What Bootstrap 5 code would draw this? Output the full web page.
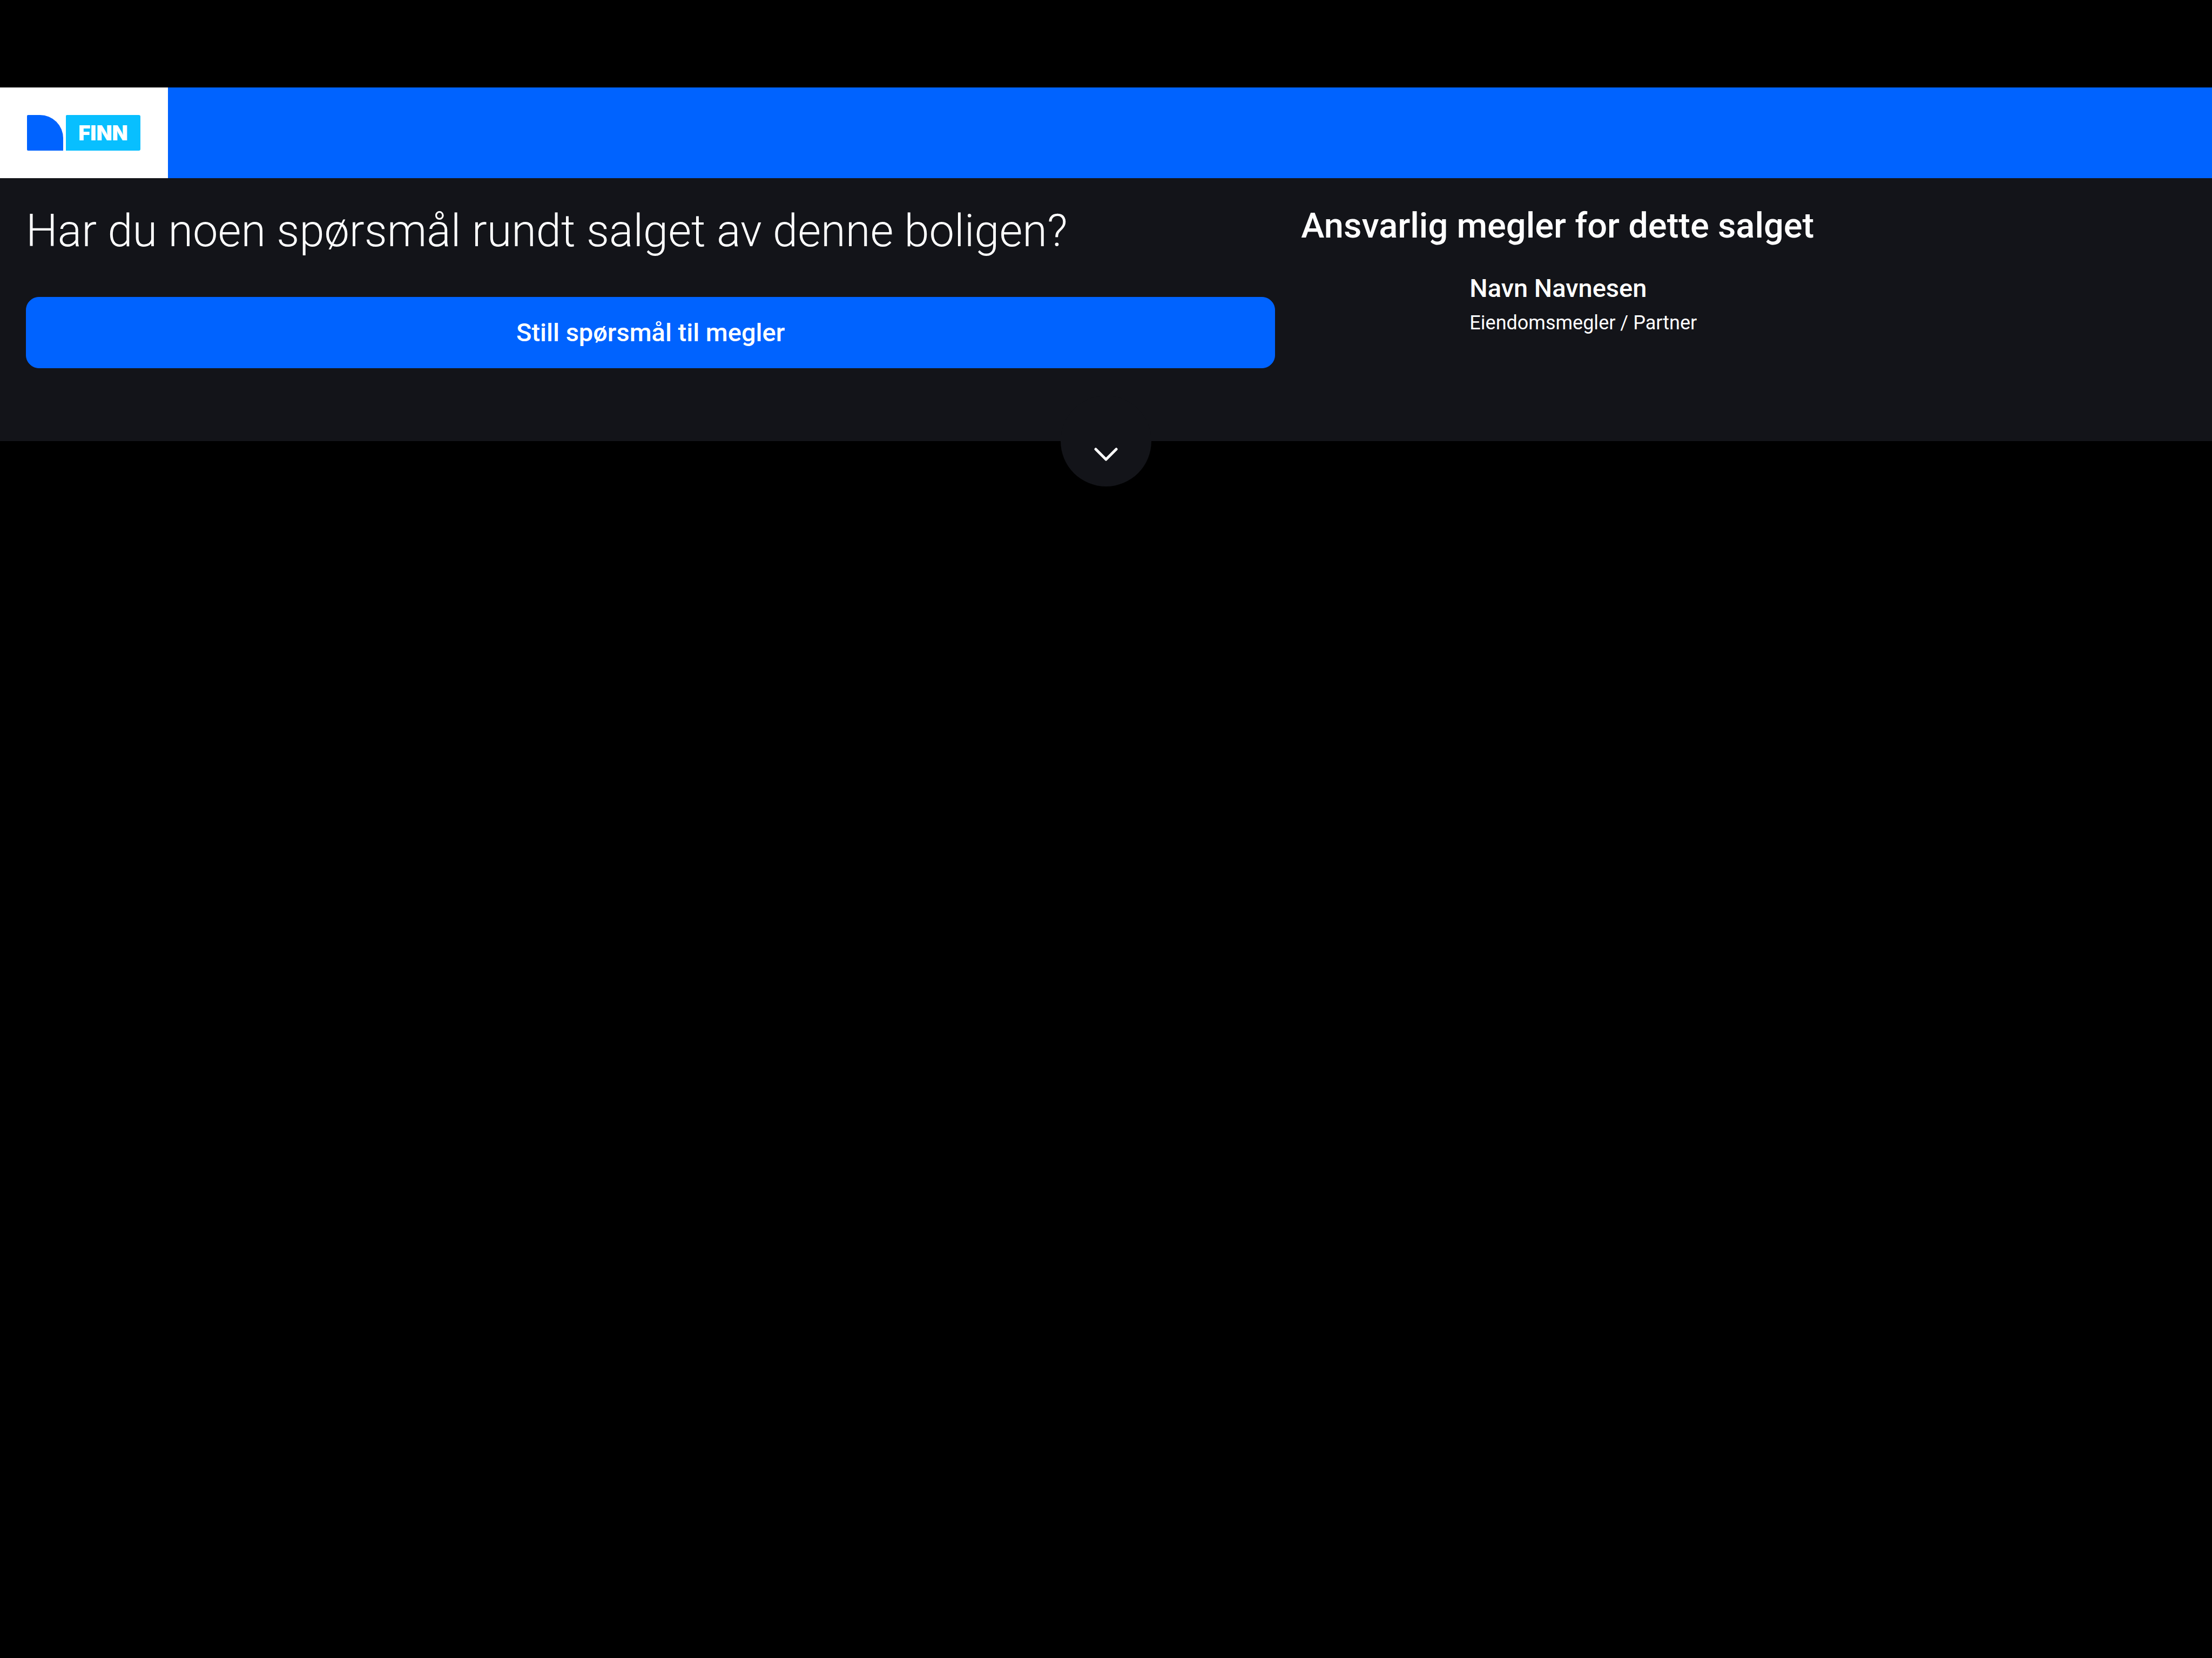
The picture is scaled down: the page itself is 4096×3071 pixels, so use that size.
<!DOCTYPE html>
<html lang="no">
<head>
<meta charset="utf-8">
<meta name="viewport" content="width=device-width, initial-scale=1">
<title>FINN</title>
<link href="https://cdn.jsdelivr.net/npm/bootstrap@5.3.0/dist/css/bootstrap.min.css" rel="stylesheet">
<style>
  body { background: #000; color: #fff; font-family: Roboto, "Liberation Sans", sans-serif; padding-top: 162px; }
  .site-top { background: #0063ff; height: 168px; }
  .brand-box { background: #fff; padding: 0 50px; }
  .brand-box svg { width: 211px; height: 68px; }
  .brand-text { font: 900 38px Inter, "Liberation Sans", sans-serif; fill: #fff; }
  .contact-panel { background: #131419; padding: 48px 48px 135px; }
  .contact-panel .row { --bs-gutter-x: 48px; }
  .question-title { font-size: 83px; line-height: 100px; font-weight: 300; margin-bottom: 72px; }
  .btn-ask {
    --bs-btn-color: #fff; --bs-btn-bg: #0063ff; --bs-btn-border-color: #0063ff;
    --bs-btn-hover-color: #fff; --bs-btn-hover-bg: #0053d6; --bs-btn-hover-border-color: #0053d6;
    --bs-btn-font-size: 47px; --bs-btn-font-weight: 500; --bs-btn-line-height: 56px;
    --bs-btn-padding-y: 37px; --bs-btn-border-radius: 24px;
  }
  .broker-title { font-size: 65px; line-height: 80px; font-weight: 500; margin-bottom: 48px; }
  .broker-photo { width: 264px; }
  .broker { gap: 48px; }
  .broker-name { font-size: 47px; line-height: 56px; font-weight: 500; margin-bottom: 12px; }
  .broker-role { font-size: 36px; line-height: 48px; }
  .btn-expand, .btn-expand:hover { background: #131419; color: #fff; }
  .btn-expand { width: 168px; height: 168px; padding: 0; border: 0; }
  .btn-expand svg { width: 48px; height: 48px; margin-top: 48px; }
</style>
</head>
<body class="min-vh-100">
<header class="site-top d-flex">
  <a class="brand-box d-flex align-items-center" href="#" aria-label="FINN">
    <svg viewBox="0 0 211 68" aria-hidden="true">
      <path d="M2 1H24A43 43 0 0 1 67 44V67H2a2 2 0 0 1-2-2V3a2 2 0 0 1 2-2Z" fill="#0063ff"/>
      <path d="M74 1H207a3 3 0 0 1 3 3V64a3 3 0 0 1-3 3H72V3a2 2 0 0 1 2-2Z" fill="#08bfff"/>
      <text class="brand-text" x="141" y="48" text-anchor="middle">FINN</text>
    </svg>
  </a>
</header>
<main>
  <section class="contact-panel position-relative">
    <div class="row">
      <div class="col-7">
        <h1 class="question-title">Har du noen spørsmål rundt salget av denne boligen?</h1>
        <button type="button" class="btn btn-ask w-100">Still spørsmål til megler</button>
      </div>
      <div class="col-5">
        <h2 class="broker-title">Ansvarlig megler for dette salget</h2>
        <div class="broker d-flex">
          <div class="broker-photo flex-shrink-0"></div>
          <div>
            <h3 class="broker-name">Navn Navnesen</h3>
            <p class="broker-role mb-0">Eiendomsmegler / Partner</p>
          </div>
        </div>
      </div>
    </div>
    <button type="button" class="btn btn-expand rounded-circle d-flex align-items-center justify-content-center position-absolute top-100 start-50 translate-middle" aria-label="Vis mer">
      <svg viewBox="0 0 48 48" fill="none" stroke="currentColor" stroke-width="5" stroke-linecap="round" stroke-linejoin="round" aria-hidden="true"><path d="M5 15l19 19 19-19"/></svg>
    </button>
  </section>
</main>
<script src="https://cdn.jsdelivr.net/npm/bootstrap@5.3.0/dist/js/bootstrap.bundle.min.js"></script>
</body>
</html>
